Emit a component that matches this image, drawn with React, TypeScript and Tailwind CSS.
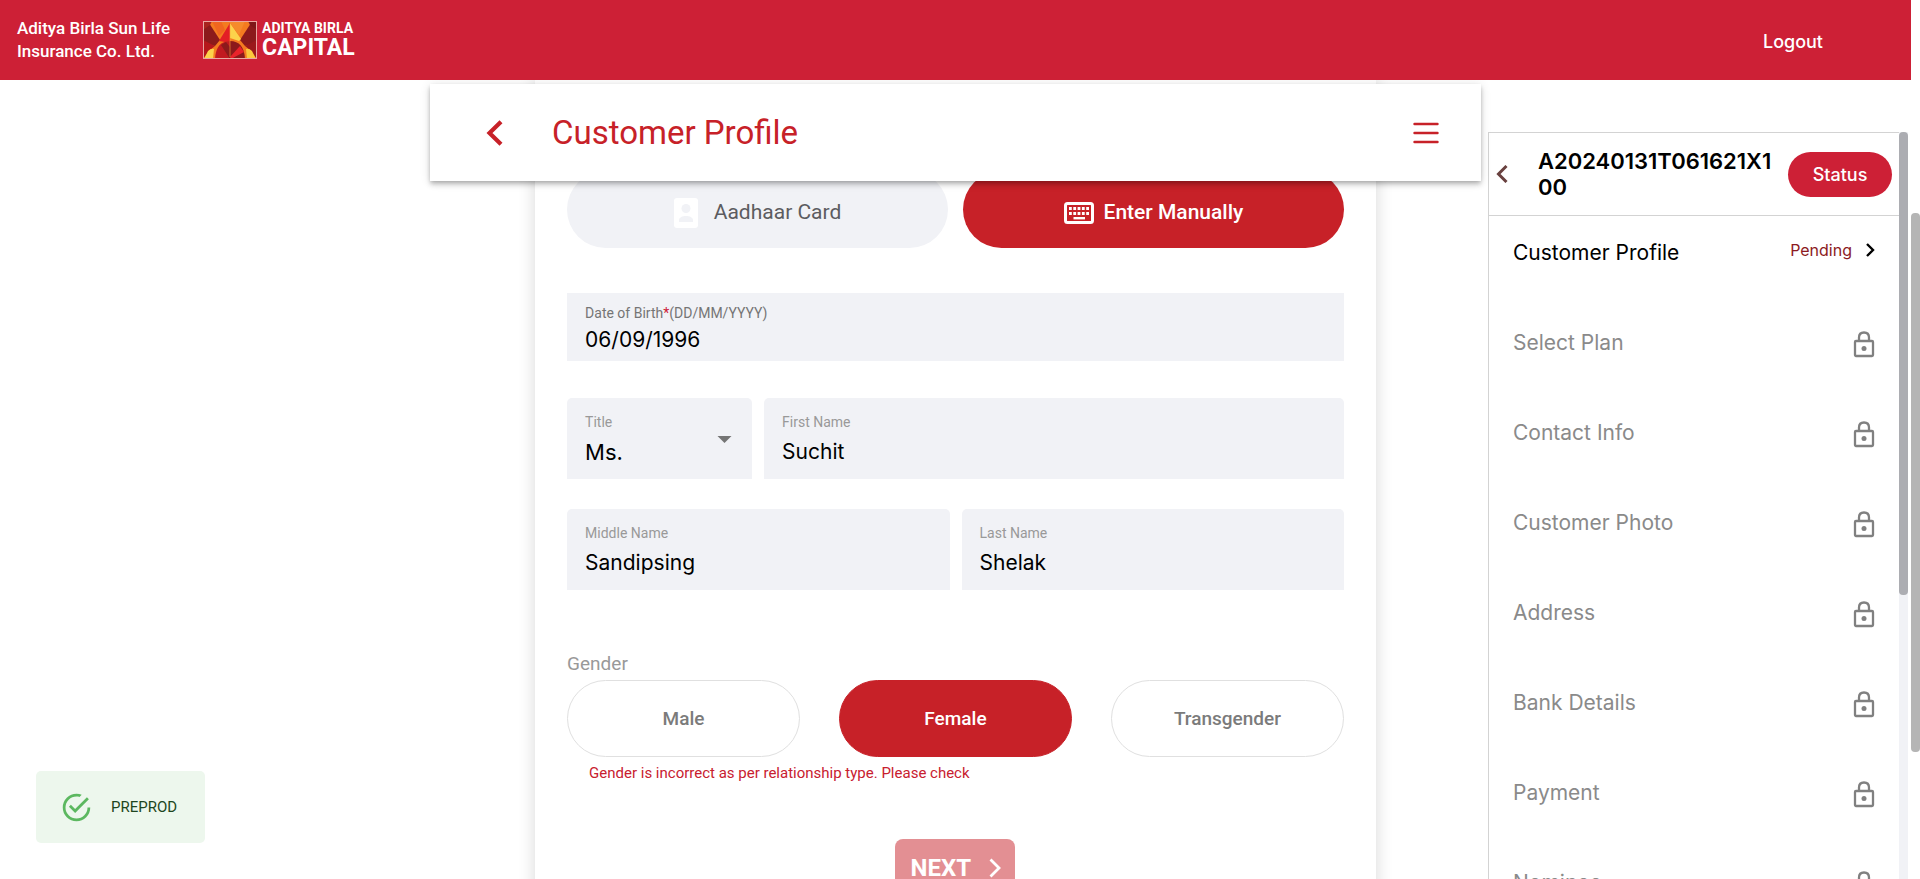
import React, { useState } from "react";

const din = "font-[Roboto,sans-serif]";
const lockedSteps = [
  "Select Plan",
  "Contact Info",
  "Customer Photo",
  "Address",
  "Bank Details",
  "Payment",
  "Nominee",
];

function BrandMark() {
  return (
    <svg viewBox="0 0 54 38" className="h-[38px] w-[54px]" aria-hidden="true">
      <rect width="54" height="38" fill="#f47b20" />
      <path d="M0 6L6 2L17 19L12 25L0 22Z" fill="#8c1a1b" />
      <path d="M54 6L48 2L37 19L42 25L54 22Z" fill="#8c1a1b" />
      <path d="M0 0H9L7 4L0 9Z" fill="#a8231d" />
      <path d="M54 0H45L47 4L54 9Z" fill="#7f1719" />
      <path d="M0 19L12 25L7 29L0 38Z" fill="#b5171b" />
      <path d="M54 19L42 25L47 29L54 38Z" fill="#9a191b" />
      <path d="M9 0H18L22 9L16 15Z" fill="#f0661f" />
      <path d="M27 2L16 20L22 21L27 20Z" fill="#e31e25" />
      <path d="M27 2L38 18L36 20L27 17Z" fill="#fcd34b" />
      <path d="M27 2L36 14L42 0H27Z" fill="#f58a2b" />
      <path d="M12 38Q13 20 27 20V38Z" fill="#c11a20" />
      <path d="M42 38Q41 20 27 20V38Z" fill="#8c1a1b" />
      <path d="M27 38L18 24L23 21L27 26Z" fill="#8c1a1b" />
      <path d="M27 36L37 25L41 31L28 38Z" fill="#e9232a" />
      <path d="M1 38L5 30Q8 27 11 28L10 38Z" fill="#fcd34b" />
      <path d="M53 38L49 30Q46 27 43 28L44 38Z" fill="#fbc83c" />
      <path d="M27 3V36" stroke="#f9a13a" strokeWidth="0.6" />
      <rect x="0.5" y="0.5" width="53" height="37" fill="none" stroke="#e9a7a0" />
    </svg>
  );
}

function LockIcon() {
  return (
    <svg viewBox="0 0 22 27" className="h-[27px] w-[22px] shrink-0" fill="none" stroke="#808080" strokeWidth="2.3" aria-label="Locked">
      <rect x="2" y="10" width="18" height="15" rx="1" />
      <path d="M6 10V6.5C6 3.5 8 1.5 11 1.5S16 3.5 16 6.5V10" />
      <circle cx="11" cy="17.5" r="2.5" fill="#808080" stroke="none" />
    </svg>
  );
}

function Field({ id, label, value, className }: { id: string; label: string; value: string; className: string }) {
  return (
    <div className={`flex h-[81px] min-w-0 flex-col gap-1.5 rounded-t-[5px] bg-[#f1f2f6] px-[18px] pt-3.5 ${className}`}>
      <label htmlFor={id} className={`${din} text-sm leading-5 text-[#999]`}>{label}</label>
      <input id={id} defaultValue={value} className="h-7 w-full bg-transparent text-[21px] text-black outline-none" />
    </div>
  );
}

export default function App() {
  const [gender, setGender] = useState("Female");
  return (
    <div className="flex h-screen overflow-hidden bg-white font-[Inter,sans-serif]">
      <div className="flex min-w-0 flex-1 flex-col">
        <header className="relative z-20 flex h-20 shrink-0 items-center bg-[#cd2036] pl-[17px] pr-[88px] text-white">
          <div className={`${din} mr-[33px] text-[17px] font-medium leading-[23px]`}>
            <div>Aditya Birla Sun Life</div>
            <div>Insurance Co. Ltd.</div>
          </div>
          <BrandMark />
          <div className={`${din} ml-[5px] font-bold`}>
            <div className="text-sm leading-4">ADITYA BIRLA</div>
            <div className="text-[23px] leading-6">CAPITAL</div>
          </div>
          <button className="ml-auto pt-0.5 text-[18px] font-medium">Logout</button>
        </header>

        <div className="grid min-h-0 flex-1 grid-cols-[9fr_22fr_9fr] grid-rows-1">
          <div />
          <main className="grid min-w-0 justify-items-center">
            <div className={`${din} z-10 col-start-1 row-start-1 mt-1 flex h-[97px] w-full items-center bg-white pl-14 pr-[42px] text-[#c72128] shadow-[0_2px_4px_-1px_rgba(0,0,0,0.2),0_4px_5px_0_rgba(0,0,0,0.14),0_1px_10px_0_rgba(0,0,0,0.12)]`}>
              <button aria-label="Back" className="mr-[49px]">
                <svg viewBox="0 0 17 26" className="h-[26px] w-[17px]" fill="none" stroke="currentColor" strokeWidth="4.2">
                  <path d="M15 1.7L3.5 13L15 24.3" />
                </svg>
              </button>
              <h1 className="text-[33px] leading-10">Customer Profile</h1>
              <button aria-label="Menu" className="ml-auto">
                <svg viewBox="0 0 26 22" className="h-[22px] w-[26px]" stroke="currentColor" strokeWidth="2.4" strokeLinecap="round">
                  <path d="M1.5 2H24.5M1.5 11H24.5M1.5 20H24.5" />
                </svg>
              </button>
            </div>

            <form className="col-start-1 row-start-1 flex w-4/5 flex-col px-8 pt-[91px] shadow-[0_0_16px_rgba(0,0,0,0.16)]" onSubmit={(e) => e.preventDefault()}>
              <div className={`${din} grid grid-cols-2 gap-[15px] text-[21px]`}>
                <button type="button" className="flex h-[77px] items-center justify-center gap-4 rounded-full bg-[#f1f2f6] pt-1.5 text-[#5c5c60]">
                  <svg viewBox="0 0 24 30" className="h-[30px] w-6" fill="none">
                    <rect width="24" height="30" rx="3" fill="#fff" />
                    <circle cx="12" cy="10.5" r="4.5" fill="#f1f2f6" />
                    <path d="M5 24V22C5 19.5 8.5 18 12 18S19 19.5 19 22V24Z" fill="#f1f2f6" />
                  </svg>
                  Aadhaar Card
                </button>
                <button type="button" className="flex h-[77px] items-center justify-center gap-2.5 rounded-full bg-[#c72128] pt-1.5 font-medium text-white">
                  <svg viewBox="0 0 30 22" className="h-[22px] w-[30px]" fill="none" stroke="currentColor">
                    <rect x="1.5" y="1.5" width="27" height="19" rx="2" strokeWidth="3" />
                    <path d="M5 6.5H25M5 11.5H25" strokeWidth="3" strokeDasharray="2.8 1.5" />
                    <path d="M9.5 16.2H21" strokeWidth="2.4" />
                  </svg>
                  Enter Manually
                </button>
              </div>

              <div className="mt-[45px] flex h-[68px] flex-col gap-[3px] bg-[#f1f2f6] px-[18px] pt-2.5">
                <label htmlFor="dob" className={`${din} text-sm leading-5 text-[#757575]`}>
                  Date of Birth<span className="text-[#cd2036]">*</span>(DD/MM/YYYY)
                </label>
                <input id="dob" defaultValue="06/09/1996" className="h-7 w-full bg-transparent text-[21px] text-black outline-none" />
              </div>

              <div className="mt-[37px] flex gap-3">
                <div className="relative flex h-[81px] w-[185px] flex-col gap-1.5 rounded-t-[5px] bg-[#f1f2f6] px-[18px] pt-3.5">
                  <label htmlFor="title" className={`${din} text-sm leading-5 text-[#999]`}>Title</label>
                  <select id="title" defaultValue="Ms." className="h-7 w-full appearance-none bg-transparent text-[22px] leading-7 text-black outline-none">
                    <option>Mr.</option>
                    <option>Ms.</option>
                  </select>
                  <svg viewBox="0 0 14 7" className="pointer-events-none absolute right-5 top-[38px] h-[7px] w-[15px]" fill="#757575">
                    <path d="M0 0H14L7 7Z" />
                  </svg>
                </div>
                <Field id="first" label="First Name" value="Suchit" className="flex-1" />
              </div>

              <div className="mt-[30px] flex gap-3">
                <Field id="middle" label="Middle Name" value="Sandipsing" className="flex-1" />
                <Field id="last" label="Last Name" value="Shelak" className="flex-1" />
              </div>

              <div className={`${din} mt-[62px] text-[19px] leading-6 text-[#999]`} id="gender-label">Gender</div>
              <div className={`${din} mt-1 grid grid-cols-3 gap-[39px] text-[19px] font-medium`} role="group" aria-labelledby="gender-label">
                {["Male", "Female", "Transgender"].map((g) => (
                  <button
                    key={g}
                    type="button"
                    onClick={() => setGender(g)}
                    className={`h-[77px] rounded-full border pt-0.5 ${g === gender ? "border-[#c72128] bg-[#c72128] text-white" : "border-[#e0e0e0] bg-white text-[#7b7b7b]"}`}
                  >
                    {g}
                  </button>
                ))}
              </div>
              <p className={`${din} mt-1 pl-[22px] text-[15px] leading-6 text-[#c8202f]`}>
                Gender is incorrect as per relationship type. Please check
              </p>
              <button className={`${din} mt-[54px] flex h-[58px] w-[120px] shrink-0 items-center justify-between self-center rounded-lg bg-[#e38f93] pl-[15px] pr-3.5 text-[24px] font-bold text-white`}>
                NEXT
                <svg viewBox="0 0 12 20" className="h-5 w-3" fill="none" stroke="currentColor" strokeWidth="2.8">
                  <path d="M1.5 1.5L10 10L1.5 18.5" />
                </svg>
              </button>
            </form>
          </main>

          <aside className="mt-[52px] flex min-h-0 pl-[7px] pr-[3px]">
            <div className="min-w-0 flex-1 overflow-hidden border-l border-t border-[#d3d3d3]">
              <div className="flex h-[83px] items-center border-b border-[#d3d3d3] pl-[7px] pr-[7px]">
                <button aria-label="Previous" className="mr-[30px] shrink-0">
                  <svg viewBox="0 0 12 18" className="h-[18px] w-3" fill="none" stroke="#69413f" strokeWidth="3">
                    <path d="M10.5 1L2.5 9L10.5 17" />
                  </svg>
                </button>
                <h2 className="min-w-0 flex-1 break-all pr-2 text-[22px] font-semibold leading-[26px] text-black">A20240131T061621X100</h2>
                <button className="h-[45px] w-[104px] shrink-0 rounded-full bg-[#cd2036] text-[18px] font-medium text-white">Status</button>
              </div>
              <ul className="px-6 pt-px text-[21px] leading-6">
                <li className="flex h-[90px] items-start justify-between pt-6 text-black">
                  Customer Profile
                  <button className="flex items-center gap-3.5 text-base leading-[18px] text-[#8c1a22]">
                    Pending
                    <svg viewBox="0 0 9 14" className="h-3.5 w-[9px]" fill="none" stroke="#000" strokeWidth="2.4">
                      <path d="M1 1L7 7L1 13" />
                    </svg>
                  </button>
                </li>
                {lockedSteps.map((step) => (
                  <li key={step} className="flex h-[90px] items-start justify-between pt-6 text-[#8a8a8a]">
                    {step}
                    <LockIcon />
                  </li>
                ))}
              </ul>
            </div>
            <div className="w-[9px] shrink-0 bg-[#f1f2f6]">
              <div className="h-[62%] rounded bg-[#acadb2]" />
            </div>
          </aside>
        </div>
      </div>

      <div className="w-[9px] shrink-0 bg-white pt-[213px]">
        <div className="h-[81%] rounded bg-[#b5b5b5]" />
      </div>

      <div role="status" className={`${din} fixed bottom-9 left-9 flex h-[72px] items-center gap-[18px] rounded-[5px] bg-[#edf7ed] pl-6 pr-7 text-[15px] text-[#1e4620]`}>
        <svg viewBox="0 0 24 24" className="h-[33px] w-[33px]" fill="#5cb860">
          <path d="M20,12A8,8 0 0,1 12,20A8,8 0 0,1 4,12A8,8 0 0,1 12,4C12.76,4 13.5,4.11 14.2,4.31L15.77,2.74C14.61,2.26 13.34,2 12,2A10,10 0 0,0 2,12A10,10 0 0,0 12,22A10,10 0 0,0 22,12M7.91,10.08L6.5,11.5L11,16L21,6L19.59,4.58L11,13.17L7.91,10.08Z" />
        </svg>
        PREPROD
      </div>
    </div>
  );
}
